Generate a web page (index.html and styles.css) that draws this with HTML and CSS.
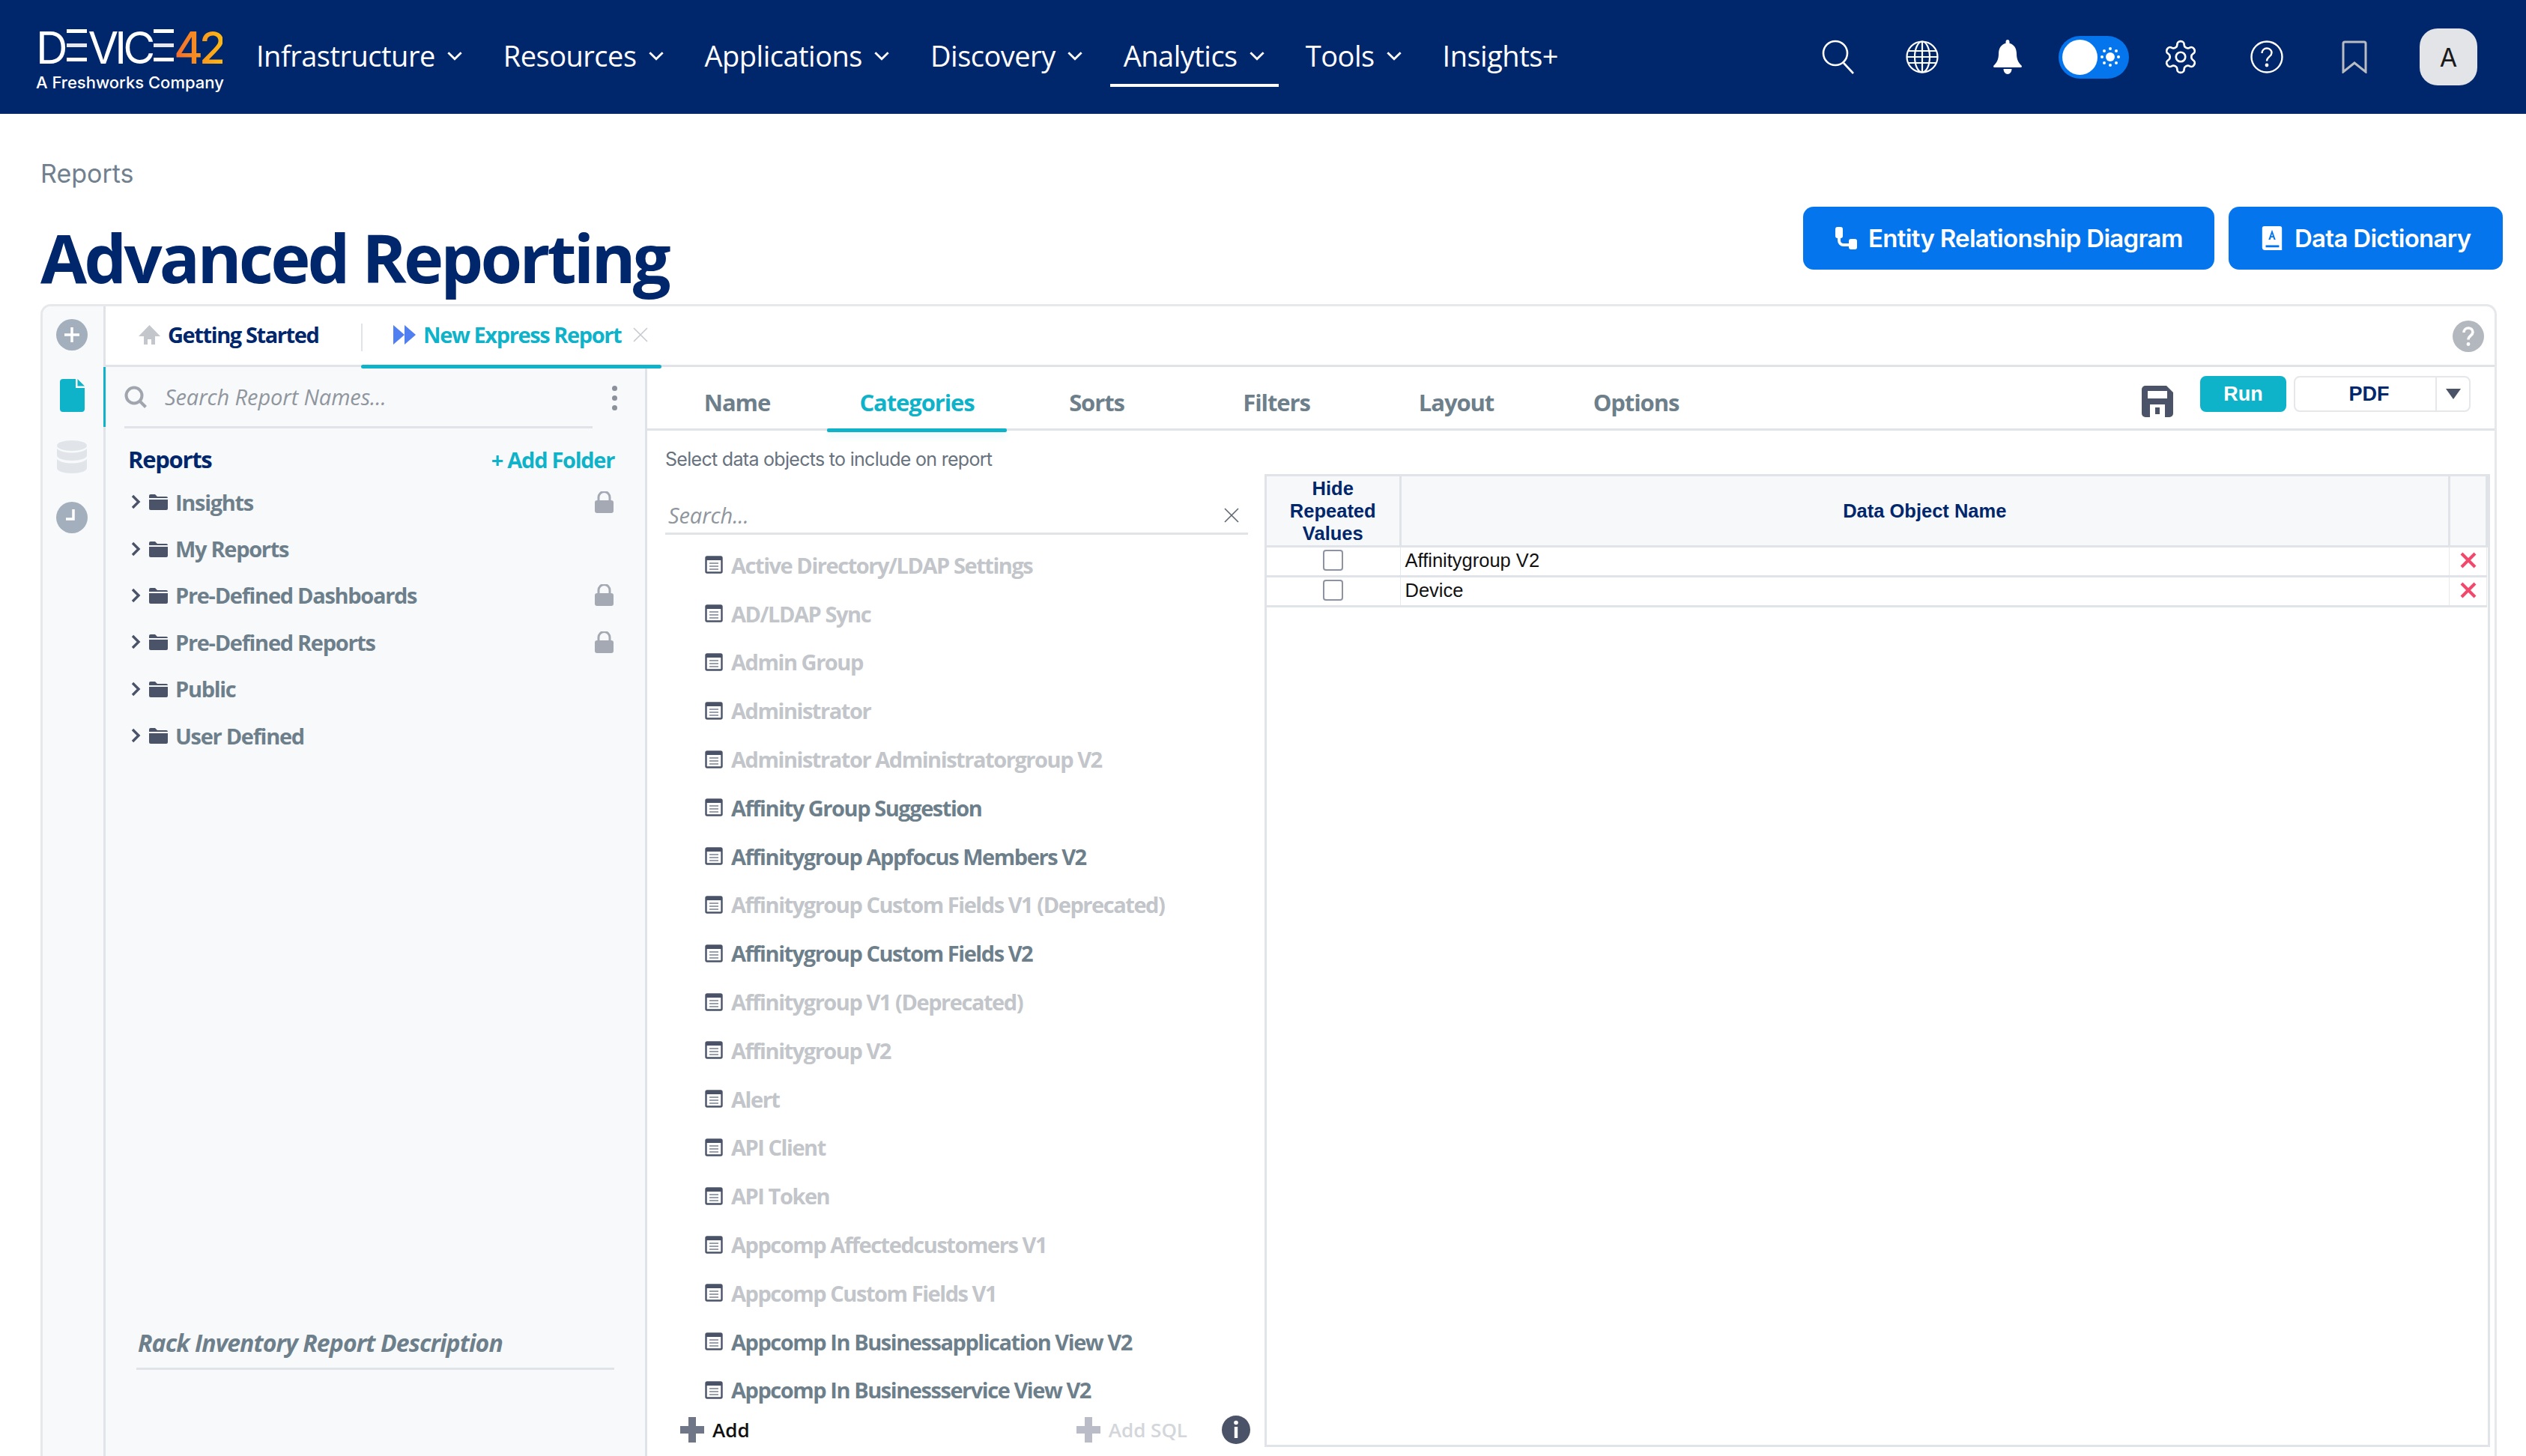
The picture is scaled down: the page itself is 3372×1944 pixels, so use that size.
FILE: index.html
```html
<!DOCTYPE html>
<html lang="en">
<head>
    <meta charset="UTF-8">
    <meta name="viewport" content="width=device-width, initial-scale=1.0">
    <title>Advanced Reporting</title>
    <link rel="stylesheet" href="styles.css">
</head>
<body>
    <svg class="icon-defs" aria-hidden="true">
        <symbol id="chevron-down" viewBox="0 0 20 12"><path d="M2 2l8 8 8-8" fill="none" stroke="currentColor" stroke-width="2.6"/></symbol>
        <symbol id="folder" viewBox="0 0 25 22"><path d="M0 3a2 2 0 0 1 2-2h6l3 3h12a2 2 0 0 1 2 2H0z" fill="#4a5368"/><path d="M0 8h25v12a2 2 0 0 1-2 2H2a2 2 0 0 1-2-2z" fill="#4a5368"/></symbol>
        <symbol id="chev-right" viewBox="0 0 13 20"><path d="M2 2l8 8-8 8" fill="none" stroke="#4a5368" stroke-width="3.4"/></symbol>
        <symbol id="lock" viewBox="0 0 25 29"><path d="M5 13V8a7.500 7.500 0 0 1 15 0v5" fill="none" stroke="#a4a9b3" stroke-width="3"/><rect y="12" width="25" height="17" rx="3" fill="#a4a9b3"/></symbol>
        <symbol id="table-doc" viewBox="0 0 24 24"><rect x="1.500" y="1.500" width="21" height="21" rx="1.500" fill="#fff" stroke="#4a5368" stroke-width="2.400"/><rect x="1" y="1" width="22" height="5" fill="#4a5368"/><path d="M6 10h12M6 14h12M6 18h12" stroke="#9aa0ac" stroke-width="2"/></symbol>
        <symbol id="plus" viewBox="0 0 32 34"><path d="M11 0h10v12h11v10H21v12H11V22H0V12h11z" fill="currentColor"/></symbol>
        <symbol id="red-x" viewBox="0 0 24 24"><path d="M3 3l18 18M21 3L3 21" stroke="#f0496c" stroke-width="4.200" fill="none"/></symbol>
    </svg>

    <header class="topbar">
        <a href="#" class="logo">
            <span class="logo-word">D<span class="logo-e">E</span>VIC<span class="logo-e">E</span><span class="logo-num">42</span></span>
            <span class="logo-sub">A Freshworks Company</span>
        </a>
        <nav class="main-nav">
            <a href="#" class="nav-item">Infrastructure <svg class="nav-caret"><use href="#chevron-down"/></svg></a>
            <a href="#" class="nav-item">Resources <svg class="nav-caret"><use href="#chevron-down"/></svg></a>
            <a href="#" class="nav-item">Applications <svg class="nav-caret"><use href="#chevron-down"/></svg></a>
            <a href="#" class="nav-item">Discovery <svg class="nav-caret"><use href="#chevron-down"/></svg></a>
            <a href="#" class="nav-item nav-active">Analytics <svg class="nav-caret"><use href="#chevron-down"/></svg></a>
            <a href="#" class="nav-item">Tools <svg class="nav-caret"><use href="#chevron-down"/></svg></a>
            <a href="#" class="nav-item">Insights+</a>
        </nav>
        <div class="top-tools">
            <svg class="tool tool-search" viewBox="0 0 44 46" fill="none" stroke="#fff" stroke-width="2.600"><circle cx="18" cy="18" r="16"/><path d="M29 31l13 14"/></svg>
            <svg class="tool tool-globe" viewBox="0 0 44 44" fill="none" stroke="#fff" stroke-width="2.200"><circle cx="22" cy="22" r="20.500"/><ellipse cx="22" cy="22" rx="10" ry="20.500"/><path d="M22 1.500v41M3 14h38M1.500 22h41M3 30h38"/></svg>
            <svg class="tool tool-bell" viewBox="0 0 40 46" fill="#fff"><path d="M20 0c1.500 0 2.500 1.200 2.500 3v1.800C29 6.500 32 12 32 19c0 8 3 12 6.500 15.500.8 1 .5 2.500-1 2.500H2.500c-1.500 0-1.800-1.500-1-2.500C5 31 8 27 8 19 8 12 11 6.500 17.500 4.800V3C17.500 1.200 18.500 0 20 0z"/><path d="M14.500 39h11c0 4-2.500 7-5.500 7s-5.500-3-5.500-7z"/></svg>
            <div class="theme-toggle">
                <span class="toggle-knob"></span>
                <svg class="toggle-sun" viewBox="0 0 28 28" fill="#fff"><circle cx="14" cy="14" r="6"/><circle cx="14" cy="3" r="2"/><circle cx="14" cy="25" r="2"/><circle cx="3" cy="14" r="2"/><circle cx="25" cy="14" r="2"/><circle cx="6" cy="6" r="2"/><circle cx="22" cy="6" r="2"/><circle cx="6" cy="22" r="2"/><circle cx="22" cy="22" r="2"/></svg>
            </div>
            <svg class="tool tool-gear" viewBox="0 0 24 24" fill="none" stroke="#fff" stroke-width="1.300"><path d="M12.220 2h-.44a2 2 0 0 0-2 2v.18a2 2 0 0 1-1 1.730l-.43.25a2 2 0 0 1-2 0l-.15-.08a2 2 0 0 0-2.730.73l-.22.38a2 2 0 0 0 .73 2.730l.15.1a2 2 0 0 1 1 1.720v.51a2 2 0 0 1-1 1.740l-.15.09a2 2 0 0 0-.73 2.730l.22.38a2 2 0 0 0 2.730.73l.15-.08a2 2 0 0 1 2 0l.43.25a2 2 0 0 1 1 1.730V20a2 2 0 0 0 2 2h.44a2 2 0 0 0 2-2v-.18a2 2 0 0 1 1-1.730l.43-.25a2 2 0 0 1 2 0l.15.08a2 2 0 0 0 2.730-.73l.22-.39a2 2 0 0 0-.73-2.730l-.15-.08a2 2 0 0 1-1-1.740v-.5a2 2 0 0 1 1-1.740l.15-.09a2 2 0 0 0 .73-2.730l-.22-.38a2 2 0 0 0-2.730-.73l-.15.08a2 2 0 0 1-2 0l-.43-.25a2 2 0 0 1-1-1.730V4a2 2 0 0 0-2-2z"/><circle cx="12" cy="12" r="3"/></svg>
            <svg class="tool tool-help" viewBox="0 0 44 44" fill="none" stroke="#fff" stroke-width="2.400"><circle cx="22" cy="22" r="20.500"/><path d="M15.500 17c0-4 3-6.500 6.500-6.500s6.500 2.500 6.500 6c0 5-6.500 5.500-6.500 11"/><circle cx="22" cy="33" r="1.200" fill="#fff"/></svg>
            <svg class="tool tool-mark" viewBox="0 0 34 44" fill="none" stroke="#b9bcc2" stroke-width="3"><path d="M2 42V4a2 2 0 0 1 2-2h26a2 2 0 0 1 2 2v38L17 30z"/></svg>
            <div class="avatar">A</div>
        </div>
    </header>

    <main class="page">
        <div class="crumb">Reports</div>
        <div class="title-row">
            <h1 class="page-title">Advanced Reporting</h1>
            <div class="title-buttons">
                <a href="#" class="blue-button">
                    <svg class="btn-icon" viewBox="0 0 30 30" fill="#fff"><rect x="1" y="0" width="10" height="15" rx="3"/><rect x="19" y="16" width="11" height="14" rx="3"/><path d="M6 12v6a6 6 0 0 0 6 6h8" fill="none" stroke="#fff" stroke-width="4"/></svg>
                    Entity Relationship Diagram
                </a>
                <a href="#" class="blue-button">
                    <svg class="btn-icon" viewBox="0 0 30 34" fill="#fff"><path d="M4 0h22a3 3 0 0 1 3 3v31H5a4 4 0 0 1-4-4V3a3 3 0 0 1 3-3z"/><path d="M6 27h19v3H6z" fill="#0475ec"/><path d="M15 5l-5 14h2.500l1-3h3.200l1 3H20zM14 14l1-3.500 1 3.500z" fill="#0475ec"/></svg>
                    Data Dictionary
                </a>
            </div>
        </div>

        <section class="panel">
            <aside class="rail">
                <div class="rail-slot">
                    <svg class="rail-icon" viewBox="0 0 42 42"><circle cx="21" cy="21" r="21" fill="#a3afbd"/><path d="M21 11v20M11 21h20" stroke="#fff" stroke-width="3.500"/></svg>
                </div>
                <div class="rail-slot">
                    <svg class="rail-doc" viewBox="0 0 33 44"><path d="M4 0h17v12h12v28a4 4 0 0 1-4 4H4a4 4 0 0 1-4-4V4a4 4 0 0 1 4-4z" fill="#0fb3c9"/><path d="M23.500 0L33 9.500H23.500z" fill="#0fb3c9"/></svg>
                </div>
                <div class="rail-slot">
                    <svg class="rail-db" viewBox="0 0 40 44" fill="#e1e4e9"><ellipse cx="20" cy="7" rx="20" ry="7"/><path d="M0 11c4 4 12 5.500 20 5.500S36 15 40 11v9c0 4-9 7-20 7S0 24 0 20z"/><path d="M0 25c4 4 12 5.500 20 5.500S36 29 40 25v12c0 4-9 7-20 7S0 41 0 37z"/></svg>
                </div>
                <div class="rail-slot">
                    <svg class="rail-icon" viewBox="0 0 42 42"><circle cx="21" cy="21" r="21" fill="#a3afbd"/><path d="M23 10v13H13" fill="none" stroke="#fff" stroke-width="3.500"/></svg>
                </div>
            </aside>

            <div class="panel-content">
                <div class="tabbar">
                    <a href="#" class="top-tab tab-home">
                        <svg class="home-icon" viewBox="0 0 29 26" fill="#c3c7cc"><path d="M14.500 0L29 15h-7v11h-5v-7h-5v7H7V15H0z"/></svg>
                        Getting Started
                    </a>
                    <a href="#" class="top-tab tab-report">
                        <svg class="play-icon" viewBox="0 0 30 26" fill="#4f7ff0"><path d="M0 0l15 13L0 26zM15 0l15 13-15 13z"/></svg>
                        New Express Report
                        <svg class="tab-close" viewBox="0 0 20 20" fill="none" stroke="#c6cad0" stroke-width="1.600"><path d="M1 1l18 18M19 1L1 19"/></svg>
                    </a>
                    <svg class="panel-help" viewBox="0 0 42 42"><circle cx="21" cy="21" r="21" fill="#b3b8bf"/><path d="M15 16c0-4 3-6 6-6s6 2 6 5.500c0 4.500-6 5-6 10" fill="none" stroke="#fff" stroke-width="3.600"/><circle cx="21" cy="31.500" r="2.400" fill="#fff"/></svg>
                </div>

                <div class="panel-body">
                    <aside class="sidebar">
                        <div class="side-search">
                            <div class="search-field">
                                <svg class="search-icon" viewBox="0 0 30 30" fill="none" stroke="#a1a6ae" stroke-width="4"><circle cx="13" cy="13" r="10.500"/><path d="M20.500 20.500l8 8"/></svg>
                                <span class="placeholder">Search Report Names...</span>
                            </div>
                            <div class="kebab"><span></span><span></span><span></span></div>
                        </div>
                        <div class="tree-head">
                            <span class="tree-title">Reports</span>
                            <a href="#" class="add-folder">+ Add Folder</a>
                        </div>
                        <ul class="tree">
                            <li class="tree-row"><svg class="tree-chev"><use href="#chev-right"/></svg><svg class="tree-folder"><use href="#folder"/></svg>Insights<svg class="tree-lock"><use href="#lock"/></svg></li>
                            <li class="tree-row"><svg class="tree-chev"><use href="#chev-right"/></svg><svg class="tree-folder"><use href="#folder"/></svg>My Reports</li>
                            <li class="tree-row"><svg class="tree-chev"><use href="#chev-right"/></svg><svg class="tree-folder"><use href="#folder"/></svg>Pre-Defined Dashboards<svg class="tree-lock"><use href="#lock"/></svg></li>
                            <li class="tree-row"><svg class="tree-chev"><use href="#chev-right"/></svg><svg class="tree-folder"><use href="#folder"/></svg>Pre-Defined Reports<svg class="tree-lock"><use href="#lock"/></svg></li>
                            <li class="tree-row"><svg class="tree-chev"><use href="#chev-right"/></svg><svg class="tree-folder"><use href="#folder"/></svg>Public</li>
                            <li class="tree-row"><svg class="tree-chev"><use href="#chev-right"/></svg><svg class="tree-folder"><use href="#folder"/></svg>User Defined</li>
                        </ul>
                        <div class="report-desc">Rack Inventory Report Description</div>
                    </aside>

                    <div class="editor">
                        <div class="editor-bar">
                            <a href="#" class="editor-tab">Name</a>
                            <a href="#" class="editor-tab editor-tab-active">Categories</a>
                            <a href="#" class="editor-tab">Sorts</a>
                            <a href="#" class="editor-tab">Filters</a>
                            <a href="#" class="editor-tab">Layout</a>
                            <a href="#" class="editor-tab">Options</a>
                            <div class="editor-actions">
                                <svg class="save-icon" viewBox="0 0 42 42"><path d="M5 0h28l9 9v28a5 5 0 0 1-5 5H5a5 5 0 0 1-5-5V5a5 5 0 0 1 5-5z" fill="#4a5368"/><rect x="8" y="7" width="26" height="10" fill="#fff"/><rect x="11" y="25" width="20" height="17" fill="#fff"/><rect x="18" y="29" width="6" height="9" fill="#4a5368"/></svg>
                                <a href="#" class="run-button">Run</a>
                                <div class="format-select">
                                    <span class="format-value">PDF</span>
                                    <span class="format-arrow"><svg viewBox="0 0 20 14" class="arrow-icon"><path d="M0 0h20L10 14z" fill="#4a5368"/></svg></span>
                                </div>
                            </div>
                        </div>

                        <div class="editor-body">
                            <div class="categories">
                                <p class="hint">Select data objects to include on report</p>
                                <div class="cat-search">
                                    <span class="placeholder">Search...</span>
                                    <svg class="cat-clear" viewBox="0 0 20 20" fill="none" stroke="#5e6673" stroke-width="1.600"><path d="M1 1l18 18M19 1L1 19"/></svg>
                                </div>
                                <ul class="object-list">
                                    <li class="object off"><svg class="object-icon"><use href="#table-doc"/></svg>Active Directory/LDAP Settings</li>
                                    <li class="object off"><svg class="object-icon"><use href="#table-doc"/></svg>AD/LDAP Sync</li>
                                    <li class="object off"><svg class="object-icon"><use href="#table-doc"/></svg>Admin Group</li>
                                    <li class="object off"><svg class="object-icon"><use href="#table-doc"/></svg>Administrator</li>
                                    <li class="object off"><svg class="object-icon"><use href="#table-doc"/></svg>Administrator Administratorgroup V2</li>
                                    <li class="object"><svg class="object-icon"><use href="#table-doc"/></svg>Affinity Group Suggestion</li>
                                    <li class="object"><svg class="object-icon"><use href="#table-doc"/></svg>Affinitygroup Appfocus Members V2</li>
                                    <li class="object off"><svg class="object-icon"><use href="#table-doc"/></svg>Affinitygroup Custom Fields V1 (Deprecated)</li>
                                    <li class="object"><svg class="object-icon"><use href="#table-doc"/></svg>Affinitygroup Custom Fields V2</li>
                                    <li class="object off"><svg class="object-icon"><use href="#table-doc"/></svg>Affinitygroup V1 (Deprecated)</li>
                                    <li class="object off"><svg class="object-icon"><use href="#table-doc"/></svg>Affinitygroup V2</li>
                                    <li class="object off"><svg class="object-icon"><use href="#table-doc"/></svg>Alert</li>
                                    <li class="object off"><svg class="object-icon"><use href="#table-doc"/></svg>API Client</li>
                                    <li class="object off"><svg class="object-icon"><use href="#table-doc"/></svg>API Token</li>
                                    <li class="object off"><svg class="object-icon"><use href="#table-doc"/></svg>Appcomp Affectedcustomers V1</li>
                                    <li class="object off"><svg class="object-icon"><use href="#table-doc"/></svg>Appcomp Custom Fields V1</li>
                                    <li class="object"><svg class="object-icon"><use href="#table-doc"/></svg>Appcomp In Businessapplication View V2</li>
                                    <li class="object"><svg class="object-icon"><use href="#table-doc"/></svg>Appcomp In Businessservice View V2</li>
                                </ul>
                                <div class="cat-footer">
                                    <a href="#" class="add-link"><svg class="add-plus"><use href="#plus"/></svg>Add</a>
                                    <a href="#" class="add-link add-sql"><svg class="add-plus"><use href="#plus"/></svg>Add SQL</a>
                                    <svg class="info-icon" viewBox="0 0 38 38"><circle cx="19" cy="19" r="19" fill="#4a5368"/><rect x="16.800" y="15" width="4.400" height="15" fill="#fff"/><circle cx="19" cy="9.500" r="2.800" fill="#fff"/></svg>
                                </div>
                            </div>

                            <div class="selected-frame">
                                <table class="selected-table">
                                    <thead>
                                        <tr>
                                            <th class="col-hide">Hide<br>Repeated<br>Values</th>
                                            <th>Data Object Name</th>
                                            <th class="col-remove"></th>
                                        </tr>
                                    </thead>
                                    <tbody>
                                        <tr>
                                            <td class="cell-check"><span class="checkbox"></span></td>
                                            <td>Affinitygroup V2</td>
                                            <td class="cell-remove"><svg class="remove-icon"><use href="#red-x"/></svg></td>
                                        </tr>
                                        <tr>
                                            <td class="cell-check"><span class="checkbox"></span></td>
                                            <td>Device</td>
                                            <td class="cell-remove"><svg class="remove-icon"><use href="#red-x"/></svg></td>
                                        </tr>
                                    </tbody>
                                </table>
                            </div>
                        </div>
                    </div>
                </div>
            </div>
        </section>
    </main>
</body>
</html>
```

FILE: styles.css
```css
* {
    box-sizing: border-box;
}

html, body {
    height: 100%;
}

body {
    margin: 0;
    font-family: 'Open Sans', sans-serif;
    background-color: #fff;
    color: #00266b;
    display: flex;
    flex-direction: column;
    height: 1944px;
    overflow: hidden;
}

a {
    text-decoration: none;
    color: inherit;
}

ul {
    list-style: none;
    margin: 0;
    padding: 0;
}

.icon-defs {
    position: absolute;
    width: 0;
    height: 0;
}

/* top navigation */
.topbar {
    flex: none;
    height: 152px;
    background-color: #00266b;
    color: #fff;
    display: flex;
    align-items: center;
    padding-left: 48px;
}

.logo {
    display: flex;
    flex-direction: column;
    width: 250px;
    margin-top: 10px;
    margin-right: 26px;
}

.logo-word {
    font-family: 'Inter', sans-serif;
    font-size: 59px;
    line-height: 50px;
    letter-spacing: -5px;
    white-space: nowrap;
}

.logo-e {
    display: inline-block;
    color: transparent;
    width: 27px;
    margin: 0 2px 0 3px;
    height: 43px;
    background: linear-gradient(#fff 0 5px, transparent 5px 19px, #e6e8ee 19px 24px, transparent 24px 38px, #fff 38px 43px);
}

.logo-num {
    margin-left: -2px;
    font-weight: 500;
    background: linear-gradient(90deg, #f26a2e, #fdb813);
    -webkit-background-clip: text;
    background-clip: text;
    color: transparent;
}

.logo-sub {
    margin-top: 8px;
    font-family: 'Inter', sans-serif;
    font-size: 22px;
    font-weight: 500;
    line-height: 26px;
    white-space: nowrap;
}

.main-nav {
    display: flex;
    height: 100%;
    align-items: center;
}

.nav-item {
    font-size: 38px;
    font-weight: 500;
    letter-spacing: -0.5px;
    height: 76px;
    display: flex;
    align-items: center;
    gap: 15px;
    padding: 0 18px 4px;
    margin-right: 18px;
    border-bottom: 4px solid transparent;
    margin-top: 4px;
    white-space: nowrap;
}

.nav-active {
    border-bottom-color: #fff;
}

.nav-caret {
    width: 22px;
    height: 13px;
}

.top-tools {
    margin-left: auto;
    display: flex;
    align-items: center;
    padding-right: 65px;
}

.tool {
    display: block;
}

.tool-search {
    width: 44px;
    height: 46px;
    margin-right: 68px;
}

.tool-globe {
    width: 44px;
    height: 44px;
    margin-right: 72px;
}

.tool-bell {
    width: 40px;
    height: 46px;
    margin-right: 48px;
}

.theme-toggle {
    width: 94px;
    height: 57px;
    border-radius: 29px;
    background-color: #0475ec;
    display: flex;
    align-items: center;
    padding: 0 5px;
    margin-right: 44px;
}

.toggle-knob {
    width: 47px;
    height: 47px;
    border-radius: 50%;
    background-color: #fff;
}

.toggle-sun {
    width: 28px;
    height: 28px;
    margin-left: 3px;
}

.tool-gear {
    width: 50px;
    height: 50px;
    margin-right: 68px;
}

.tool-help {
    width: 44px;
    height: 44px;
    margin-right: 78px;
}

.tool-mark {
    width: 34px;
    height: 44px;
    margin-right: 70px;
}

.avatar {
    width: 77px;
    height: 76px;
    border-radius: 24px;
    background-color: #e3e4e8;
    color: #1a1a1a;
    font-family: 'Inter', sans-serif;
    font-size: 34px;
    display: flex;
    align-items: center;
    justify-content: center;
}

/* page head */
.page {
    flex: 1;
    min-height: 0;
    display: flex;
    flex-direction: column;
    padding: 62px 31px 0 54px;
}

.crumb {
    font-family: 'Inter', sans-serif;
    font-size: 34px;
    line-height: 36px;
    color: #71808e;
}

.title-row {
    display: flex;
    justify-content: space-between;
    height: 156px;
    flex: none;
}

.page-title {
    margin: 38px 0 0;
    font-size: 90px;
    line-height: 110px;
    font-weight: 700;
    letter-spacing: -3.8px;
    color: #00266b;
}

.title-buttons {
    display: flex;
    gap: 19px;
    margin-top: 26px;
}

.blue-button {
    height: 84px;
    padding: 0 42.500px;
    border-radius: 14px;
    background-color: #0475ec;
    color: #fff;
    font-family: 'Inter', sans-serif;
    font-size: 33px;
    font-weight: 600;
    letter-spacing: -0.7px;
    display: flex;
    align-items: center;
    gap: 15px;
    white-space: nowrap;
}

.btn-icon {
    width: 30px;
    height: 32px;
}

/* report panel */
.panel {
    flex: 1;
    min-height: 0;
    margin-right: 8px;
    border: 3px solid #e6e8eb;
    border-bottom: none;
    border-radius: 14px 14px 0 0;
    display: flex;
}

.rail {
    flex: none;
    width: 84px;
    background-color: #f8f9fb;
    border-right: 3px solid #e0e3e8;
    border-top-left-radius: 12px;
    padding: 0 3px 0 0;
}

.rail-slot {
    height: 81.500px;
    display: flex;
    align-items: center;
    justify-content: center;
}

.rail-slot:first-child {
    margin-top: -3px;
}

.rail-icon {
    width: 42px;
    height: 42px;
}

.rail-doc {
    width: 33px;
    height: 44px;
}

.rail-db {
    width: 40px;
    height: 44px;
}

.panel-content {
    flex: 1;
    min-width: 0;
    display: flex;
    flex-direction: column;
}

.tabbar {
    flex: none;
    height: 81px;
    display: flex;
    align-items: stretch;
    border-bottom: 3px solid #e0e3e8;
    padding-left: 44px;
}

.top-tab {
    display: flex;
    align-items: center;
    padding-bottom: 3px;
    font-size: 29px;
    font-weight: 700;
    letter-spacing: -1.400px;
    white-space: nowrap;
}

.tab-home {
    width: 297px;
    gap: 10px;
    color: #00266b;
}

.home-icon {
    width: 29px;
    height: 26px;
}

.tab-report {
    position: relative;
    width: 401px;
    color: #0fb3c9;
    padding-left: 43px;
    gap: 10px;
}

.tab-report::before {
    content: "";
    position: absolute;
    left: 0;
    top: 23px;
    bottom: 18px;
    width: 2px;
    background-color: #e0e3e8;
}

.tab-report::after {
    content: "";
    position: absolute;
    left: 0;
    right: 0;
    bottom: -5px;
    height: 5px;
    border-radius: 3px;
    background-color: #0fb3c9;
}

.play-icon {
    width: 30px;
    height: 26px;
}

.tab-close {
    width: 20px;
    height: 20px;
    margin-left: 6px;
}

.panel-help {
    width: 42px;
    height: 42px;
    margin: 19px 14px 0 auto;
}

.panel-body {
    flex: 1;
    min-height: 0;
    display: flex;
}

/* left report tree */
.sidebar {
    flex: none;
    width: 723px;
    background-color: #f8f9fb;
    border-right: 3px solid #e0e3e8;
    display: flex;
    flex-direction: column;
}

.side-search {
    position: relative;
    flex: none;
    height: 82px;
    padding-left: 25px;
    display: flex;
    align-items: stretch;
}

.side-search::before {
    content: "";
    position: absolute;
    left: -3px;
    top: 0;
    width: 3px;
    height: 80px;
    background-color: #0fb3c9;
}

.search-field {
    width: 625px;
    border-bottom: 3px solid #e0e3e8;
    display: flex;
    align-items: center;
    gap: 24px;
}

.search-icon {
    width: 30px;
    height: 30px;
}

.placeholder {
    font-style: italic;
    font-size: 29px;
    letter-spacing: -0.1px;
    color: #8f969e;
}

.kebab {
    display: flex;
    flex-direction: column;
    justify-content: center;
    gap: 6px;
    margin-left: 26px;
}

.kebab span {
    width: 7px;
    height: 7px;
    border-radius: 50%;
    background-color: #8b919b;
}

.tree-head {
    flex: none;
    display: flex;
    justify-content: space-between;
    align-items: center;
    height: 44px;
    margin: 19px 41px 4px 30px;
}

.tree-title {
    font-size: 31px;
    font-weight: 700;
    letter-spacing: -1.300px;
}

.add-folder {
    font-size: 29px;
    font-weight: 700;
    letter-spacing: -1.300px;
    color: #0fb3c9;
}

.tree-row {
    height: 62.400px;
    display: flex;
    align-items: center;
    padding: 0 42px 0 34px;
    font-size: 29px;
    font-weight: 700;
    letter-spacing: -1.300px;
    color: #6d7f8b;
}

.tree-chev {
    width: 13px;
    height: 20px;
    margin-right: 11px;
}

.tree-folder {
    width: 25px;
    height: 22px;
    margin-right: 10px;
}

.tree-lock {
    width: 25px;
    height: 29px;
    margin-left: auto;
}

.report-desc {
    margin: auto 41px 115px;
    padding: 0 2px 12px;
    border-bottom: 3px solid #e0e3e8;
    font-size: 32px;
    font-weight: 700;
    font-style: italic;
    letter-spacing: -0.9px;
    color: #6d7f8b;
}

/* editor area */
.editor {
    flex: 1;
    min-width: 0;
    display: flex;
    flex-direction: column;
}

.editor-bar {
    position: relative;
    flex: none;
    height: 85px;
    display: flex;
    border-bottom: 3px solid #e0e3e8;
}

.editor-tab {
    position: relative;
    width: 240px;
    font-size: 31px;
    font-weight: 700;
    letter-spacing: -1.100px;
    color: #6d7f8b;
    text-align: center;
    line-height: 46px;
    padding-top: 24px;
}

.editor-tab-active {
    color: #0fb3c9;
}

.editor-tab-active::after {
    content: "";
    position: absolute;
    left: 0;
    right: 0;
    bottom: -5px;
    height: 5px;
    border-radius: 2px;
    background-color: #0fb3c9;
    box-shadow: 0 6px 10px rgba(15, 179, 201, 0.12);
}

.editor-actions {
    margin-left: auto;
    display: flex;
    align-items: flex-start;
    padding: 12px 32px 0 0;
}

.save-icon {
    width: 42px;
    height: 42px;
    margin: 13px 36px 0 0;
}

.run-button {
    width: 115px;
    height: 48px;
    border-radius: 8px;
    background-color: #0fb3c9;
    color: #fff;
    font-family: 'Liberation Sans', sans-serif;
    font-size: 27px;
    font-weight: 700;
    text-align: center;
    line-height: 48px;
    margin-right: 10px;
}

.format-select {
    width: 236px;
    height: 48px;
    border: 2px solid #e5e7ea;
    border-radius: 8px;
    display: flex;
    font-family: 'Liberation Sans', sans-serif;
    font-size: 27px;
    font-weight: 700;
}

.format-value {
    flex: 1;
    padding-left: 10px;
    text-align: center;
    line-height: 44px;
}

.format-arrow {
    width: 45px;
    border-left: 2px solid #e5e7ea;
    display: flex;
    align-items: center;
    justify-content: center;
}

.arrow-icon {
    width: 20px;
    height: 14px;
}

.editor-body {
    flex: 1;
    min-height: 0;
    display: flex;
}

.categories {
    flex: none;
    width: 778px;
    margin-left: 24px;
    display: flex;
    flex-direction: column;
}

.hint {
    margin: 20px 0 0;
    font-family: 'Inter', sans-serif;
    font-size: 25px;
    line-height: 36px;
    letter-spacing: -0.7px;
    color: #68727e;
}

.cat-search {
    flex: none;
    height: 50px;
    margin-top: 33px;
    padding: 0 12px 0 4px;
    border-bottom: 3px solid #e0e3e8;
    display: flex;
    align-items: center;
    justify-content: space-between;
}

.cat-clear {
    width: 20px;
    height: 20px;
}

.object-list {
    flex: 1;
    min-height: 0;
    margin-top: 8px;
    overflow: hidden;
}

.object {
    height: 64.800px;
    display: flex;
    align-items: center;
    padding-left: 53px;
    font-size: 29px;
    font-weight: 700;
    letter-spacing: -1.450px;
    color: #6d7f8b;
    white-space: nowrap;
}

.object.off {
    color: #c2c5c9;
}

.object-icon {
    width: 24px;
    height: 24px;
    margin-right: 11px;
}

.cat-footer {
    flex: none;
    height: 44px;
    margin: 0 -3px 13px 20px;
    display: flex;
    align-items: center;
}

.add-link {
    display: flex;
    align-items: center;
    gap: 11px;
    font-size: 26px;
    font-weight: 600;
    color: #111;
}

.add-plus {
    width: 32px;
    height: 34px;
    color: #6f7688;
}

.add-sql {
    margin-left: auto;
    color: #d3d6da;
}

.add-sql .add-plus {
    color: #babdc7;
}

.info-icon {
    width: 38px;
    height: 38px;
    margin-left: 46px;
}

/* selected objects table */
.selected-frame {
    flex: 1;
    min-width: 0;
    margin: 58px 6px 12px 22px;
    border: 3px solid #e0e3e8;
}

.selected-table {
    width: 100%;
    border-collapse: collapse;
    font-family: 'Liberation Sans', sans-serif;
    font-size: 25.500px;
    color: #111;
}

.selected-table th {
    height: 93px;
    background-color: #f6f8fa;
    color: #00266b;
    font-size: 25.500px;
    line-height: 30px;
    font-weight: 700;
    border-right: 3px solid #e0e3e8;
    border-bottom: 3px solid #e0e3e8;
    padding: 0;
}

.selected-table td {
    height: 40px;
    padding: 0 6px 2px;
    border-right: 1px solid #e8eaed;
    border-bottom: 3px solid #e0e3e8;
}

.col-hide {
    width: 178px;
}

.col-remove {
    width: 50px;
}

.cell-check {
    text-align: center;
}

.checkbox {
    display: block;
    width: 27px;
    height: 28px;
    margin: 0 auto;
    border: 2px solid #8d93a0;
    border-radius: 4px;
    background-color: #fff;
}

.cell-remove {
    text-align: center;
}

.remove-icon {
    display: block;
    width: 24px;
    height: 24px;
    margin: 0 auto;
}
```
